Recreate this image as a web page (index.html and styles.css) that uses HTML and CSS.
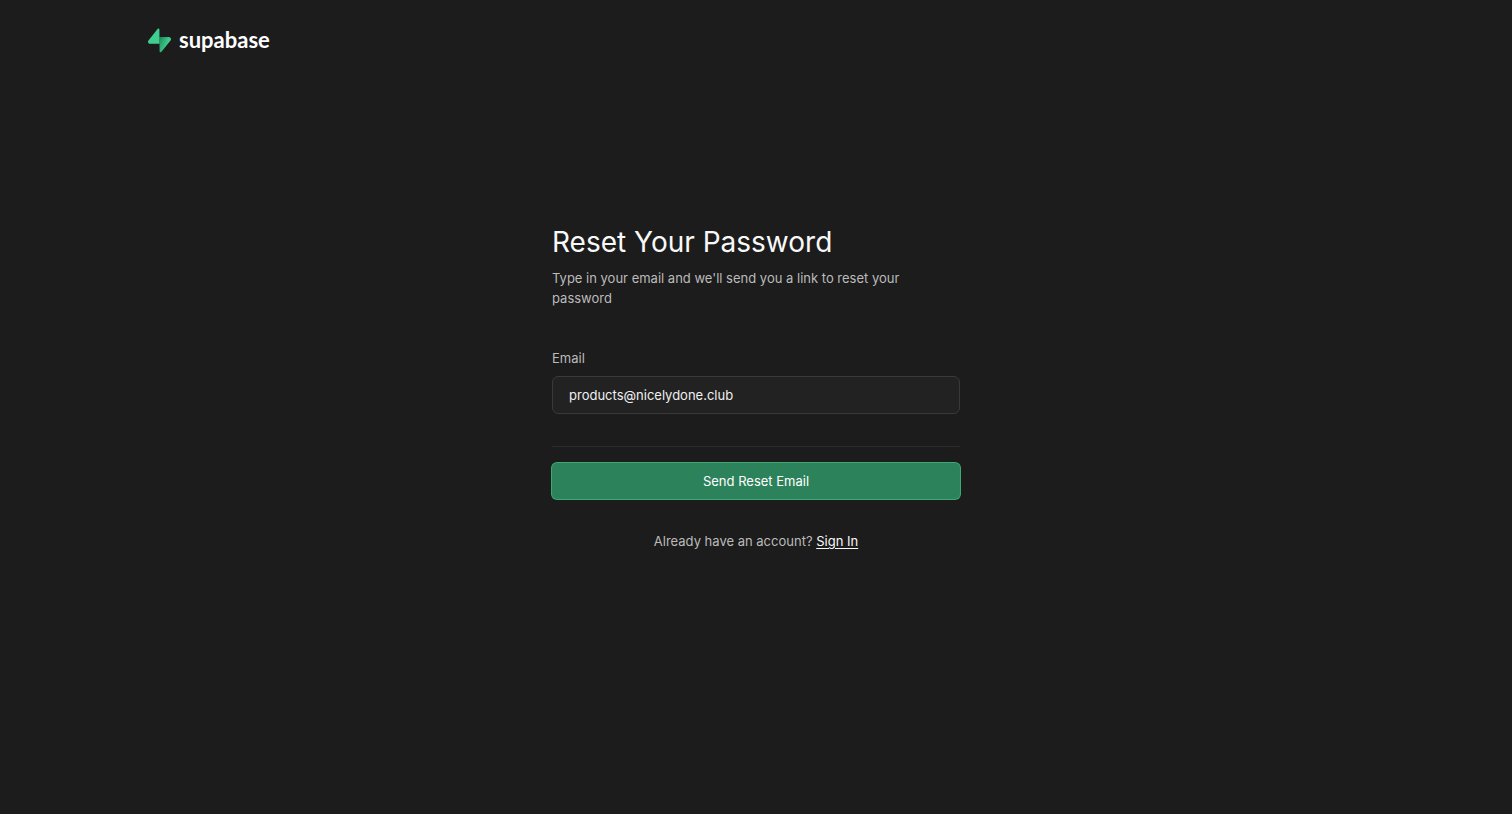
FILE: index.html
```html
<!DOCTYPE html>
<html lang="en">
<head>
<meta charset="utf-8">
<meta name="viewport" content="width=device-width, initial-scale=1">
<title>Reset Your Password | Supabase</title>
<link rel="stylesheet" href="styles.css">
</head>
<body>
<header class="header">
  <a class="logo" href="#">
    <svg class="logo-mark" viewBox="0 0 109 113" aria-hidden="true">
      <defs>
        <linearGradient id="front" x1="53.97" y1="54.97" x2="94.16" y2="71.83" gradientUnits="userSpaceOnUse">
          <stop stop-color="#249361"/><stop offset="1" stop-color="#3ecf8e"/>
        </linearGradient>
        <linearGradient id="shade" x1="36.16" y1="30.58" x2="54.48" y2="65.08" gradientUnits="userSpaceOnUse">
          <stop/><stop offset="1" stop-opacity="0"/>
        </linearGradient>
      </defs>
      <path fill="url(#front)" d="M63.708 110.284C60.848 113.885 55.05 111.912 54.981 107.314L53.974 40.063H99.194C107.384 40.063 111.952 49.523 106.859 55.937L63.708 110.284Z"/>
      <path fill="url(#shade)" fill-opacity=".2" d="M63.708 110.284C60.848 113.885 55.05 111.912 54.981 107.314L53.974 40.063H99.194C107.384 40.063 111.952 49.523 106.859 55.937L63.708 110.284Z"/>
      <path fill="#3ecf8e" d="M45.317 2.071C48.177 -1.53 53.976 .443 54.044 5.041L54.486 72.292H9.831C1.64 72.292 -2.928 62.832 2.166 56.418L45.317 2.071Z"/>
    </svg>
    <span class="logo-name">supabase</span>
  </a>
</header>
<main class="main">
  <div class="panel">
    <h1 class="title">Reset Your Password</h1>
    <p class="subtitle">Type in your email and we'll send you a link to reset your password</p>
    <form class="form">
      <label class="label" for="email">Email</label>
      <input class="input" id="email" type="email" value="products@nicelydone.club">
      <hr class="divider">
      <button class="button" type="submit">Send Reset Email</button>
    </form>
    <p class="account">Already have an account? <a class="link" href="#">Sign In</a></p>
  </div>
</main>
</body>
</html>
```
FILE: styles.css
```css
*, *::before, *::after { box-sizing: border-box; }

body {
  margin: 0;
  min-height: 100vh;
  background: #1c1c1c;
  color: #bbbbbb;
  font-family: Inter, "Liberation Sans", sans-serif;
  font-size: 13px;
  line-height: 20px;
}

.header {
  display: flex;
  max-width: 1280px;
  margin: 0 auto;
  padding: 28px 32px;
}

.logo {
  display: flex;
  align-items: center;
  gap: 8px;
  color: #ffffff;
  text-decoration: none;
}

.logo-mark { width: 23px; height: 25px; }

.logo-name {
  padding-bottom: 2px;
  font-family: Lato, "Liberation Sans", sans-serif;
  font-size: 22px;
  font-weight: 700;
  line-height: 22px;
}

.main {
  display: flex;
  justify-content: center;
  padding: 143px 16px 32px;
}

.panel { width: 100%; max-width: 408px; }

.title {
  margin: 0 0 8px;
  color: #f8f8f8;
  font-size: 28px;
  font-weight: 400;
  line-height: 36px;
}

.subtitle { margin: 0 0 40px; }

.form { display: flex; flex-direction: column; }

.label { margin-bottom: 8px; }

.input {
  height: 38px;
  padding: 8px 16px;
  border: 1px solid #393939;
  border-radius: 6px;
  outline: none;
  background: #222222;
  color: #f0f0f0;
  font: inherit;
}

.divider {
  width: 100%;
  height: 1px;
  margin: 32px 0 16px;
  border: 0;
  background: #2c2c2c;
}

.button {
  height: 36px;
  padding: 0 16px;
  border: 0;
  border-radius: 5px;
  box-shadow: 0 0 0 1px #3fa877;
  background: #2c825b;
  color: #ffffff;
  font: inherit;
}

.account { margin: 32px 0 0; text-align: center; }

.link {
  color: #f8f8f8;
  text-decoration: underline;
  text-underline-offset: 2px;
}
```
